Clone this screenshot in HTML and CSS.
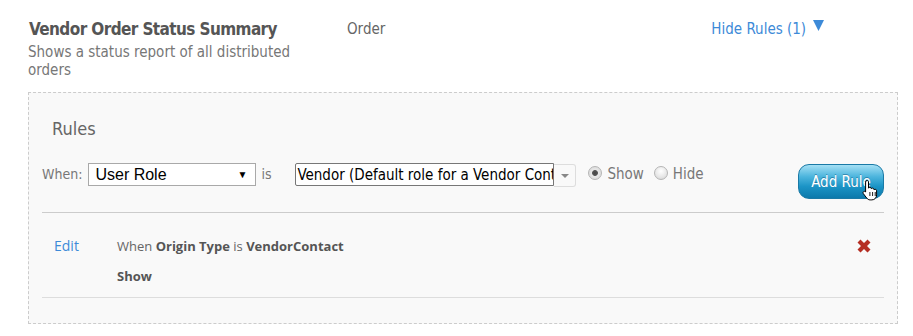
FILE: index.html
```html
<!DOCTYPE html>
<html lang="en">
<head>
  <meta charset="UTF-8">
  <title>Vendor Order Status Summary</title>
  <link rel="stylesheet" href="styles.css">
</head>
<body>
  <div class="report-head">
    <div class="report-info">
      <h1>Vendor Order Status Summary</h1>
      <p>Shows a status report of all distributed orders</p>
    </div>
    <div class="report-type">Order</div>
    <a class="toggle-rules" href="#">Hide Rules (1)
      <svg class="caret" width="11" height="11" viewBox="0 0 11 11"><path d="M0 0h11L5.5 11z" fill="#3d8ad8"/></svg>
    </a>
  </div>

  <div class="rules-box">
    <h2>Rules</h2>

    <form class="rule-form">
      <label class="lbl">When:</label>
      <div class="fake-select">User Role <span class="sel-arrow">&#9660;</span></div>
      <span class="lbl is">is</span>
      <div class="combo">
        <input type="text" value="Vendor (Default role for a Vendor Contact)">
        <span class="combo-btn"><span class="combo-tri"></span></span>
      </div>
      <label class="radio"><input type="radio" name="vis" checked> Show</label>
      <label class="radio"><input type="radio" name="vis"> Hide</label>
      <div class="btn-wrap">
        <button type="button" class="add-rule">Add Rule</button>
        <svg class="hand" width="16" height="22" viewBox="0 0 16 22">
          <path d="M5 1.5c.8 0 1.5.6 1.5 1.4v6.3c.2-.6.8-1 1.4-1 .8 0 1.4.6 1.4 1.4v.3c.2-.5.7-.8 1.3-.8.8 0 1.4.6 1.4 1.4v.5c.2-.4.7-.7 1.2-.7.8 0 1.4.6 1.4 1.4v4.2c0 2.9-2 5-4.8 5H8.2c-1.6 0-2.6-.7-3.5-1.9L1.3 14.6c-.5-.7-.4-1.6.3-2 .6-.4 1.4-.3 1.9.3l.1.1V2.9c0-.8.6-1.4 1.4-1.4z" fill="#fff" stroke="#000" stroke-width="1"/>
          <path d="M7.9 13v4M10.6 13v4M13.2 13v4" stroke="#000" stroke-width="0.9"/>
        </svg>
      </div>
    </form>

    <div class="rule-item">
      <a class="edit" href="#">Edit</a>
      <div class="rule-text">
        <div>When <b>Origin Type</b> is <b>VendorContact</b></div>
        <div><b>Show</b></div>
      </div>
      <svg class="remove" width="16" height="16" viewBox="0 0 16 16">
        <path d="M1.5 4.5 4.5 1.5 8 5 11.5 1.5 14.5 4.5 11 8 14.5 11.5 11.5 14.5 8 11 4.5 14.5 1.5 11.5 5 8z" fill="#b52e23"/>
      </svg>
    </div>
  </div>
</body>
</html>
```

FILE: styles.css
```css
body {
  margin: 0;
  font-family: "DejaVu Sans Condensed", "DejaVu Sans", sans-serif;
  color: #666;
  background: #fff;
}

.report-head {
  display: flex;
  align-items: flex-start;
  padding: 18px 0 0 29px;
  box-sizing: border-box;
  height: 92px;
}

.report-info {
  width: 290px;
}

.report-info h1 {
  margin: 0;
  font-size: 17px;
  line-height: 22px;
  letter-spacing: -0.6px;
  color: #555;
}

.report-info p {
  margin: 3px 0 0 -1px;
  font-size: 15px;
  line-height: 18px;
  color: #777;
  width: 275px;
}

.report-type {
  margin-left: 28px;
  font-size: 15px;
  line-height: 22px;
  color: #666;
}

.toggle-rules {
  margin-left: 326px;
  font-size: 15px;
  line-height: 22px;
  color: #3d8ad8;
  text-decoration: none;
}

.caret {
  margin-left: 3px;
  position: relative;
  top: -3px;
}

.rules-box {
  margin-left: 28px;
  width: 870px;
  border: 1px dashed #ccc;
  background: #f9f9f9;
  padding: 0 13px 25px 13px;
  box-sizing: border-box;
}

.rules-box h2 {
  margin: 0;
  padding: 24px 0 0 10px;
  font-size: 18px;
  line-height: 24px;
  font-weight: normal;
  color: #666;
}

.rule-form {
  display: flex;
  align-items: flex-start;
  margin-top: 22px;
  padding-bottom: 13px;
  border-bottom: 1px solid #ccc;
}

.lbl {
  font-size: 14px;
  line-height: 23px;
  color: #777;
}

.fake-select {
  margin-left: 6px;
  height: 21px;
  border: 1px solid #a9a9a9;
  background: #fff;
  font-family: "Liberation Sans", Arial, sans-serif;
  font-size: 16px;
  line-height: 21px;
  color: #000;
  padding-left: 6px;
  width: 160px;
  position: relative;
}

.sel-arrow {
  position: absolute;
  right: 8px;
  top: 0;
  font-size: 10px;
}

.is {
  margin-left: 5px;
  width: 34px;
}

.combo {
  display: flex;
}

.combo input {
  height: 21px;
  margin: 0;
  padding: 0 0 0 1px;
  border: 1px solid #777;
  border-radius: 2px 0 0 2px;
  font-family: "DejaVu Sans Condensed", sans-serif;
  font-size: 15px;
  color: #000;
  background: #fff;
  box-sizing: content-box;
  width: 256px;
}

.combo-btn {
  width: 21px;
  height: 21px;
  border: 1px solid #ddd;
  border-left: none;
  border-radius: 0 3px 3px 0;
  display: flex;
  align-items: center;
  justify-content: center;
  margin-top: 1px;
}

.combo-tri {
  width: 0;
  height: 0;
  border-left: 4px solid transparent;
  border-right: 4px solid transparent;
  border-top: 4px solid #888;
}

.radio {
  display: flex;
  align-items: center;
  font-family: "DejaVu Sans Condensed", sans-serif;
  font-size: 15px;
  line-height: 23px;
  color: #777;
  margin-left: 12px;
}

.radio + .radio {
  margin-left: 10px;
}

.radio input {
  appearance: none;
  width: 14px;
  height: 14px;
  margin: 0 5px 0 0;
  border: 1px solid #b5b5b5;
  border-radius: 50%;
  background: radial-gradient(circle at 50% 35%, #fff 0, #e6e6e6 60%, #d0d0d0 100%);
  position: relative;
  top: -2px;
}

.radio input:checked {
  background: radial-gradient(circle, #444 0, #555 2.5px, #e8e8e8 3.3px, #d6d6d6 100%);
}

.btn-wrap {
  margin-left: auto;
  position: relative;
}

.add-rule {
  width: 86px;
  height: 35px;
  margin-top: 1px;
  border: 1px solid #1a7aa6;
  border-radius: 11px;
  background: linear-gradient(#a5e0f5 0%, #4db5dd 35%, #1b94c6 65%, #0c79ab 100%);
  color: #fff;
  font-family: "DejaVu Sans Condensed", sans-serif;
  font-size: 15px;
  text-shadow: 0 -1px 0 rgba(0, 60, 100, 0.4);
  padding: 0;
}

.hand {
  position: absolute;
  left: 64px;
  top: 16px;
}

.rule-item {
  display: flex;
  align-items: flex-start;
  padding: 18px 12px 6px 12px;
  border-bottom: 1px solid #ddd;
  font-family: "Open Sans", sans-serif;
  font-size: 13px;
  line-height: 30px;
}

.edit {
  width: 63px;
  font-size: 14px;
  color: #3d8ad8;
  text-decoration: none;
}

.rule-text {
  color: #666;
}

.rule-text b {
  color: #555;
}

.remove {
  margin-left: auto;
  margin-top: 7px;
}
```
